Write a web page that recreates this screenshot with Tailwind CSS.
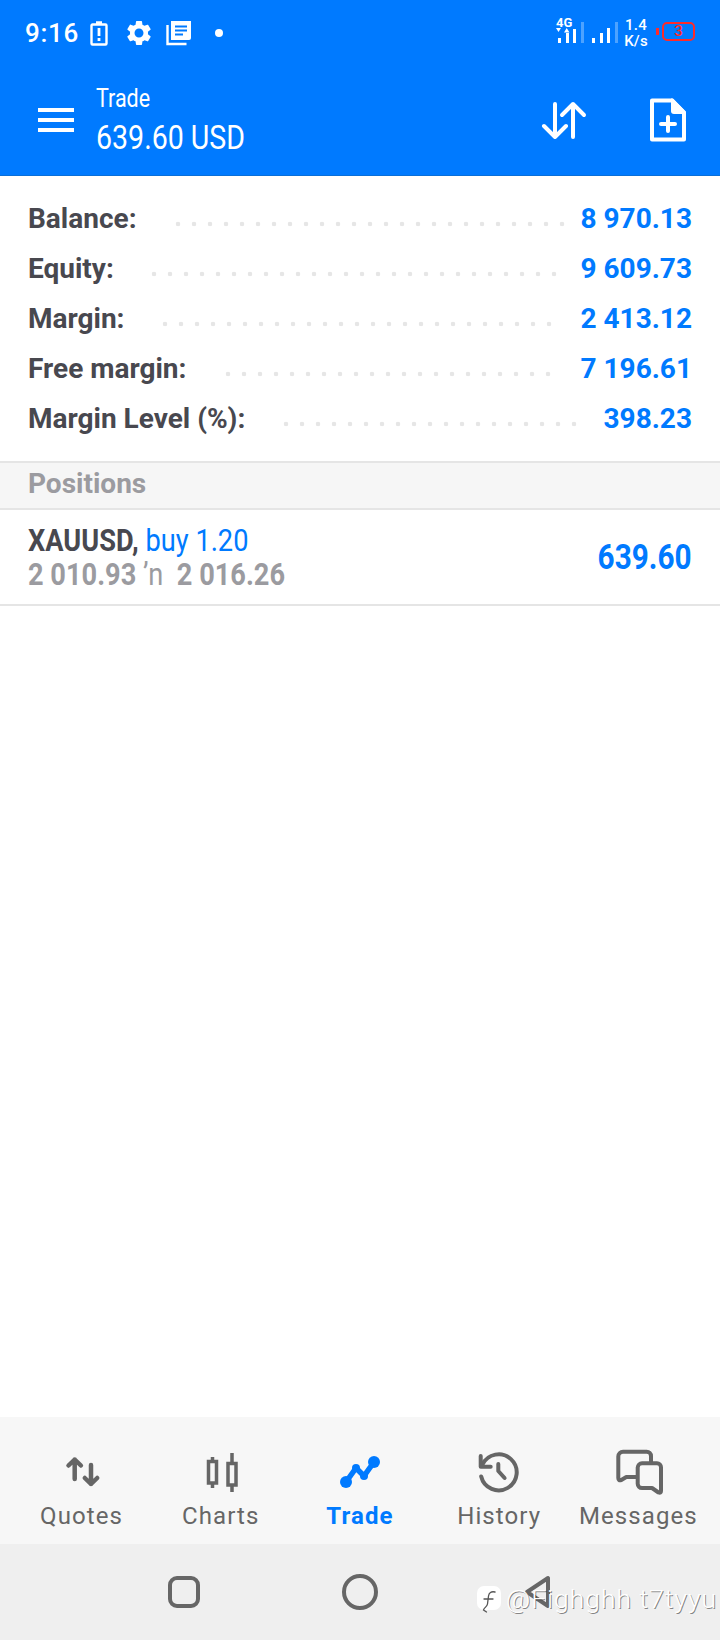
<!DOCTYPE html>
<html lang="en">
<head>
    <meta charset="UTF-8">
    <meta name="viewport" content="width=device-width, initial-scale=1.0">
    <title>Trade</title>
    <script src="https://cdn.jsdelivr.net/npm/@tailwindcss/browser@4"></script>
</head>
<body class="bg-white font-['Roboto',sans-serif]">
<div class="relative w-[720px] h-[1640px] overflow-hidden flex flex-col">

    <!-- Status bar + app bar -->
    <header class="bg-[#007aff] text-white h-[176px] border-b border-[#0a6fd8] shrink-0">
        <div class="relative h-[66px] flex items-center pl-[25px]">
            <span class="text-[26px] font-medium w-[65px] tracking-[.7px]">9:16</span>
            <svg class="w-[18px] h-[25px]" viewBox="0 0 18 25" fill="none">
                <path d="M6 1.5h6M2.5 3.500h13a1 1 0 0 1 1 1v18a1 1 0 0 1-1 1h-13a1 1 0 0 1-1-1v-18a1 1 0 0 1 1-1z" stroke="#fff" stroke-width="2.4"/>
                <rect x="7.600" y="7" width="2.800" height="8" fill="#fff"/><rect x="7.600" y="17" width="2.800" height="3" fill="#fff"/>
            </svg>
            <svg class="w-[30px] h-[30px] ml-[16px]" viewBox="0 0 24 24" fill="#fff"><path d="M19.14 12.94c.04-.3.06-.61.06-.94 0-.32-.02-.64-.07-.94l2.03-1.58c.18-.14.23-.41.12-.61l-1.92-3.32c-.12-.22-.37-.29-.59-.22l-2.39.96c-.5-.38-1.03-.7-1.62-.94l-.36-2.54c-.04-.24-.24-.41-.48-.41h-3.84c-.24 0-.43.17-.47.41l-.36 2.54c-.59.24-1.13.57-1.62.94l-2.39-.96c-.22-.08-.47 0-.59.22L2.74 8.87c-.12.21-.08.47.12.61l2.03 1.58c-.05.3-.09.63-.09.94s.02.64.07.94l-2.03 1.58c-.18.14-.23.41-.12.61l1.92 3.32c.12.22.37.29.59.22l2.39-.96c.5.38 1.03.7 1.62.94l.36 2.54c.05.24.24.41.48.41h3.84c.24 0 .44-.17.47-.41l.36-2.54c.59-.24 1.13-.56 1.62-.94l2.39.96c.22.08.47 0 .59-.22l1.92-3.32c.12-.22.07-.47-.12-.61l-2.01-1.58zM12 15.6c-1.98 0-3.6-1.62-3.6-3.6s1.62-3.6 3.6-3.6 3.6 1.62 3.6 3.6-1.62 3.6-3.6 3.6z"/></svg>
            <svg class="w-[26px] h-[26px] ml-[12px]" viewBox="0 0 26 26" fill="none">
                <path d="M1.500 5v19h19" stroke="#fff" stroke-width="2.4"/>
                <path d="M5 1h20v17a2 2 0 0 1-2 2H5z" fill="#fff"/>
                <path d="M9 6.500h12M9 10.500h12M9 14.500h8" stroke="#007aff" stroke-width="2.2"/>
            </svg>
            <span class="w-[8px] h-[8px] rounded-full bg-white ml-[23px]"></span>

            <!-- right side indicators -->
            <div class="ml-auto self-start mt-[17px] h-[26px] flex items-start mr-[25px]">
                <div class="relative w-[25.500px] h-[26px] mr-[8.500px]">
                    <span class="absolute left-[-2px] top-[1px] text-[13px] leading-[9px] font-bold">4G</span>
                    <svg class="absolute left-[-2px] top-[11px] w-[14px] h-[5px]" viewBox="0 0 14 5" fill="#fff"><path d="M0 0h5L2.500 4zM8 4.500h5.500L10.700 0z"/></svg>
                    <div class="absolute left-0 bottom-0 flex items-end gap-[4.500px]">
                        <span class="w-[3px] h-[5px] bg-white"></span><span class="w-[3px] h-[10px] bg-white"></span><span class="w-[3px] h-[14px] bg-white"></span><span class="w-[3px] h-[21px] bg-white/30"></span>
                    </div>
                </div>
                <div class="flex items-end gap-[4.500px] h-[26px] mr-[6.500px]">
                    <span class="w-[3px] h-[5px] bg-white"></span><span class="w-[3px] h-[10px] bg-white"></span><span class="w-[3px] h-[15px] bg-white"></span><span class="w-[3px] h-[21px] bg-white/30"></span>
                </div>
                <div class="flex flex-col items-center text-[15px] leading-[16px] font-medium w-[24px] mr-[8px] tracking-[.2px]"><span>1.4</span><span>K/s</span></div>
                <div class="flex items-center mt-[5px]">
                    <span class="w-[3px] h-[7px] bg-[#ff2a2a] mr-[3px]"></span>
                    <span class="w-[33px] h-[19px] border-2 border-[#ff2a2a] rounded-[5px] flex items-center justify-center text-[#ff2a2a] text-[15px] font-medium leading-none">3</span>
                </div>
            </div>
        </div>

        <div class="relative h-[109px] flex">
            <div class="w-[96px] shrink-0 pl-[38px] pt-[42px] flex flex-col gap-[6px]">
                <span class="block w-[36px] h-[4px] bg-white"></span>
                <span class="block w-[36px] h-[4px] bg-white"></span>
                <span class="block w-[36px] h-[4px] bg-white"></span>
            </div>
            <div class="flex-1 flex flex-col">
                <span class="inline-block origin-left scale-x-[.86] text-[25px] leading-[30px] mt-[18px]">Trade</span>
                <span class="inline-block origin-left scale-x-[.865] text-[33px] leading-[38px] mt-[5px]">639.60 USD</span>
            </div>
            <svg class="w-[46px] h-[38px] mt-[35px] ml-[-1px]" viewBox="0 0 46 38" fill="none" stroke="#fff" stroke-width="4" stroke-linecap="round" stroke-linejoin="round">
                <path d="M14 3v33M3 25l11 11 11-11"/>
                <path d="M32 3v33M21 14L32 3l11 11"/>
            </svg>
            <svg class="w-[38px] h-[46px] ml-[62px] mr-[33px] mt-[31px]" viewBox="0 0 38 46" fill="none">
                <path d="M3 3.500h20l12 12v27H3z" stroke="#fff" stroke-width="4" stroke-linejoin="round"/>
                <path d="M22 1.500h2L37 15v2H25a3 3 0 0 1-3-3z" fill="#fff"/>
                <path d="M19 20v14M12 27h14" stroke="#fff" stroke-width="4" stroke-linecap="round"/>
            </svg>
        </div>
    </header>

    <!-- Account summary -->
    <section class="pt-[18px] pl-[28px] pr-[28px] text-[28px] font-bold shrink-0 h-[285px]">
        <div class="flex items-center h-[50px]">
            <span class="flex-1 text-[#48484f]">Balance:</span>
            <span class="w-[400px] h-[8px] mr-[2px] mt-[9px] bg-[radial-gradient(circle,#e6e6e6_2px,transparent_2.6px)] bg-size-[16px_8px]"></span>
            <span class="w-[120px] text-right text-[#007aff]">8 970.13</span>
        </div>
        <div class="flex items-center h-[50px]">
            <span class="flex-1 text-[#48484f]">Equity:</span>
            <span class="w-[416px] h-[8px] mr-[10px] mt-[9px] bg-[radial-gradient(circle,#e6e6e6_2px,transparent_2.6px)] bg-size-[16px_8px]"></span>
            <span class="w-[120px] text-right text-[#007aff]">9 609.73</span>
        </div>
        <div class="flex items-center h-[50px]">
            <span class="flex-1 text-[#48484f]">Margin:</span>
            <span class="w-[400px] h-[8px] mr-[15px] mt-[9px] bg-[radial-gradient(circle,#e6e6e6_2px,transparent_2.6px)] bg-size-[16px_8px]"></span>
            <span class="w-[120px] text-right text-[#007aff]">2 413.12</span>
        </div>
        <div class="flex items-center h-[50px]">
            <span class="flex-1 text-[#48484f]">Free margin:</span>
            <span class="w-[336px] h-[8px] mr-[16px] mt-[9px] bg-[radial-gradient(circle,#e6e6e6_2px,transparent_2.6px)] bg-size-[16px_8px]"></span>
            <span class="w-[120px] text-right text-[#007aff]">7 196.61</span>
        </div>
        <div class="flex items-center h-[50px]">
            <span class="flex-1 text-[#48484f]">Margin Level (%):</span>
            <span class="w-[304px] h-[8px] mt-[9px] bg-[radial-gradient(circle,#e6e6e6_2px,transparent_2.6px)] bg-size-[16px_8px]"></span>
            <span class="w-[110px] text-right text-[#007aff]">398.23</span>
        </div>
    </section>

    <!-- Positions -->
    <div class="h-[49px] shrink-0 bg-[#f6f6f6] border-y-2 border-[#e5e5e5] pl-[28px] pb-[4px] flex items-center text-[28px] font-bold text-[#9b9ba0]">Positions</div>
    <div class="h-[96px] shrink-0 border-b-2 border-[#e5e5e5] pl-[28px] pr-[28px] flex items-center justify-between">
        <div class="flex flex-col">
            <div class="origin-left scale-x-[.85] whitespace-nowrap text-[32px] leading-[34px]"><span class="font-bold text-[#48484f]">XAUUSD,</span> <span class="text-[#007aff]">buy 1.20</span></div>
            <div class="origin-left scale-x-[.85] whitespace-nowrap text-[32px] leading-[34px] font-bold text-[#9b9ba0]">2 010.93 <span class="font-normal">ʼn</span>&nbsp; 2 016.26</div>
        </div>
        <div class="origin-right scale-x-[.85] text-[35px] font-bold text-[#007aff] mt-[2px]">639.60</div>
    </div>

    <div class="flex-1"></div>

    <!-- Bottom tabs -->
    <nav class="h-[127px] shrink-0 bg-[#f7f7f7] px-[12px] grid grid-cols-5 text-[24px] tracking-[1.1px] text-[#666]">
        <a class="flex flex-col items-center">
            <svg class="w-[48px] h-[48px] mt-[31px]" viewBox="0 0 48 48" fill="none" stroke="#666" stroke-width="4.500" stroke-linecap="round" stroke-linejoin="round">
                <path d="M16.700 11.500V31M10.500 17.500l6.200-6 6.200 6"/><path d="M33 17v19M26.800 30l6.200 6 6.200-6"/>
            </svg>
            <span class="mt-[7px] leading-[26px]">Quotes</span>
        </a>
        <a class="flex flex-col items-center">
            <svg class="w-[48px] h-[48px] mt-[31px]" viewBox="0 0 48 48" stroke="#666" fill="none">
                <path d="M15.500 9v31M35 5v39" stroke-width="3.500"/>
                <rect x="11.500" y="13.500" width="8" height="21.500" stroke-width="3.500" fill="#f7f7f7"/>
                <rect x="31" y="15.500" width="8" height="21.500" stroke-width="3.500" fill="#f7f7f7"/>
            </svg>
            <span class="mt-[7px] leading-[26px]">Charts</span>
        </a>
        <a class="flex flex-col items-center text-[#007aff] font-bold">
            <svg class="w-[48px] h-[48px] mt-[31px]" viewBox="0 0 48 48" fill="#007aff">
                <path d="M10 34L20 20l8 8 10-14" fill="none" stroke="#007aff" stroke-width="5.500" stroke-linejoin="round" stroke-linecap="round"/>
                <circle cx="10" cy="34" r="6"/><circle cx="20" cy="20" r="4"/><circle cx="28" cy="28" r="4"/><circle cx="38" cy="14" r="6"/>
            </svg>
            <span class="mt-[7px] leading-[26px]">Trade</span>
        </a>
        <a class="flex flex-col items-center">
            <svg class="w-[48px] h-[48px] mt-[31px]" viewBox="0 0 48 48" fill="none" stroke="#666" stroke-width="4" stroke-linecap="round" stroke-linejoin="round">
                <path d="M7.500 16.500A18 18 0 1 1 6.200 28.500"/>
                <path d="M5.700 8v10.700h10"/>
                <path d="M23.300 16v7l6.300 7"/>
            </svg>
            <span class="mt-[7px] leading-[26px]">History</span>
        </a>
        <a class="flex flex-col items-center">
            <svg class="w-[48px] h-[48px] mt-[31px] overflow-visible" viewBox="0 0 48 48" fill="none" stroke="#666" stroke-width="4" stroke-linejoin="round" stroke-linecap="round">
                <path d="M37 14V8a4.300 4.300 0 0 0-4.300-4.300H9a4.700 4.700 0 0 0-4.700 4.700V30q0 3 3 2l5-3H23"/>
                <path d="M28 15.300h15a4 4 0 0 1 4 4V43q0 2.500-2.500 1.500L38 40H28a4.300 4.300 0 0 1-4.300-4.300V19.600a4.300 4.300 0 0 1 4.300-4.300z"/>
            </svg>
            <span class="mt-[7px] leading-[26px]">Messages</span>
        </a>
    </nav>

    <!-- System navigation -->
    <div class="relative h-[96px] shrink-0 bg-[#efefef] flex items-center">
        <span class="w-[32px] h-[32px] ml-[168px] border-4 border-[#666] rounded-[9px]"></span>
        <span class="w-[36px] h-[36px] ml-[142px] border-4 border-[#666] rounded-full"></span>
        <svg class="w-[30px] h-[36px] ml-[146px]" viewBox="0 0 30 36" fill="none"><path d="M3 18L24 4v28z" stroke="#666" stroke-width="4" stroke-linejoin="round"/></svg>

        <!-- watermark sits over the back button -->
        <div class="absolute left-[477px] top-[39px] flex items-center text-white [text-shadow:1px_1px_0_rgba(0,0,0,.45)]">
            <span class="relative w-[24px] h-[24px] rounded-[7px] bg-white">
                <svg class="absolute left-[3px] top-[3px] w-[18px] h-[26px]" viewBox="0 0 18 26" fill="none" stroke="#555" stroke-width="1.300" stroke-linecap="round"><path d="M15 3c-4-1-6 1-6.500 4L7.500 15c-.5 3-3 3-4 6l3 2M4 10h9"/></svg>
            </span>
            <span class="ml-[5px] mt-[3px] text-[26.500px] font-light leading-[26px] tracking-[1px] whitespace-nowrap">@Fighghh t7tyyu</span>
        </div>
    </div>
</div>
</body>
</html>
